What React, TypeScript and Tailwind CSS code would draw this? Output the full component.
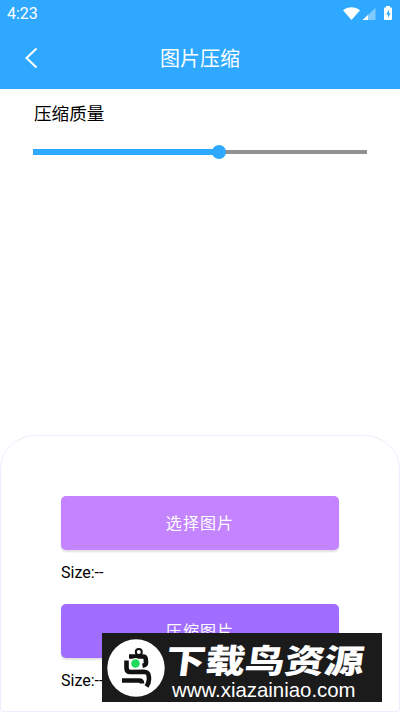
import { useState } from 'react'

export default function App() {
  const [quality] = useState(55.7)

  return (
    <div className="relative flex h-[712px] w-[400px] flex-col overflow-hidden bg-white font-[Roboto,'Noto_Sans_CJK_SC',sans-serif] text-black">
      <header className="h-[89px] shrink-0 bg-[#2ea9ff] text-white">
        <StatusBar />
        <div className="grid h-[61px] grid-cols-[60px_1fr_60px] items-center">
          <button aria-label="返回" className="-mt-[2px] pl-[24px]">
            <svg width="14" height="22" viewBox="0 0 14 22" fill="none" stroke="currentColor" strokeWidth="2">
              <path d="M12.5 1.5 2.5 11l10 9.5" />
            </svg>
          </button>
          <h1 className="text-center text-[20px] leading-[30px]">图片压缩</h1>
        </div>
      </header>

      {/* Quality slider */}
      <section className="px-[33px] pt-[11px]">
        <p className="pl-px text-[17.6px] leading-[28px]">压缩质量</p>
        <div className="mt-[17px] flex h-[14px] items-center">
          <div className="h-[6px] bg-[#2ea9ff]" style={{ width: `${quality}%` }} />
          <div className="z-10 -mx-[7px] size-[14px] shrink-0 rounded-full bg-[#2ea9ff]" />
          <div className="h-[4px] flex-1 bg-[#929292]" />
        </div>
      </section>

      <section className="mt-auto h-[277px] rounded-t-[35px] rounded-b-[3px] border border-[#efedfd] px-[60px] pt-[60px]">
        <ActionButton label="选择图片" color="bg-[#c484ff]" />
        <p className="mt-[11px] mb-[19px] text-[16px] leading-[24px]">Size:--</p>
        <ActionButton label="压缩图片" color="bg-[#a06dff]" />
        <p className="mt-[11px] text-[16px] leading-[24px]">Size:--</p>
      </section>

      <Watermark />
    </div>
  )
}

function StatusBar() {
  return (
    <div className="flex h-[28px] items-center justify-between pr-[7px] pl-[7px]">
      <span className="text-[16px] leading-[20px]">4:23</span>
      <svg width="50" height="16" viewBox="0 0 50 16" fill="currentColor">
        <path d="M0 4.2C4.8.2 12.2.2 17 4.2L8.5 14Z" />
        <path d="M32.5 2v12h-13Z" opacity=".4" />
        <path d="M25 9v5h-5.5Z" />
        <path
          fillRule="evenodd"
          d="M43 0h4v1.5h1.2q.8 0 .8.8v10.9q0 .8-.8.8h-6.4q-.8 0-.8-.8V2.3q0-.8.8-.8H43ZM46 3.5 43.2 8.4H45V12l2.5-4.8H46Z"
        />
      </svg>
    </div>
  )
}

function ActionButton({ label, color }: { label: string; color: string }) {
  return (
    <button className={`block h-[54px] w-full rounded-[5px] pt-px text-center text-[16px] leading-[24px] tracking-[1.1px] text-white shadow-[0_2px_2px_rgba(0,0,0,0.12)] ${color}`}>
      {label}
    </button>
  )
}

function Watermark() {
  return (
    <div className="absolute top-[633px] left-[102px] flex h-[69px] w-[280px] items-center bg-[#1b1b1b] pl-[5px] text-white">
      <svg className="shrink-0" width="58" height="58" viewBox="0 0 58 58" fill="none">
        <circle cx="29" cy="29" r="28.7" fill="#fff" />
        <g stroke="#111" strokeWidth="4.6" strokeLinejoin="round">
          <circle cx="31.8" cy="13" r="3" strokeWidth="2" />
          <path d="M22 17.5h14q2.6 0 2.8 2.6l.2 4q0 2-3.5 2.6" />
          <path d="M19.5 21.5v7.5q0 4 4 4l13-.3q5 0 5.3 4.5l.2 2.8q0 4-2.5 7.5" />
          <path d="M15 41.5h17q3 0 3 3" />
        </g>
        <circle cx="28.5" cy="24.5" r="5.4" fill="#fff" />
        <circle cx="28.5" cy="24.5" r="4.3" fill="#20db5b" />
      </svg>
      <div className="mt-[10px] w-[204px]">
        <p className="ml-[1px] origin-left scale-x-[1.2] -skew-x-6 text-[33px] leading-[34px] font-black whitespace-nowrap">下载鸟资源</p>
        <p className="pl-[7px] font-['Liberation_Sans',Arial,sans-serif] text-[20.4px] leading-[22px] whitespace-nowrap">www.xiazainiao.com</p>
      </div>
    </div>
  )
}
